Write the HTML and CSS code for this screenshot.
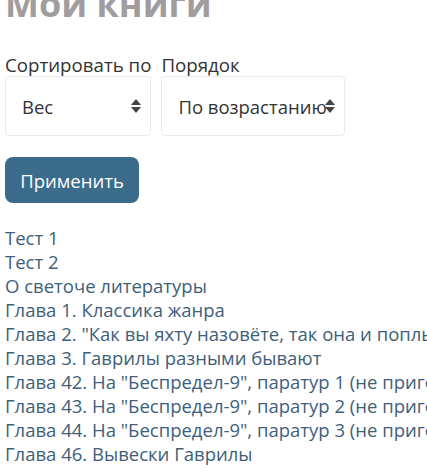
FILE: index.html
```html
<!DOCTYPE html>
<html lang="ru">
<head>
<meta charset="utf-8">
<link rel="stylesheet" href="styles.css">
</head>
<body>
<div class="page">
  <h1 class="title">Мои книги</h1>
  <form class="sort-form">
    <div class="fields">
      <div class="field">
        <label class="field-label">Сортировать по</label>
        <div class="select select-sort"><span>Вес</span><span class="arrows"></span></div>
      </div>
      <div class="field">
        <label class="field-label">Порядок</label>
        <div class="select select-order"><span>По возрастанию</span><span class="arrows"></span></div>
      </div>
    </div>
    <button type="button" class="btn">Применить</button>
  </form>
  <ul class="books">
    <li>Тест 1</li>
    <li>Тест 2</li>
    <li>О светоче литературы</li>
    <li>Глава 1. Классика жанра</li>
    <li>Глава 2. "Как вы яхту назовёте, так она и поплывёт"</li>
    <li>Глава 3. Гаврилы разными бывают</li>
    <li>Глава 42. На "Беспредел-9", паратур 1 (не пригодится)</li>
    <li>Глава 43. На "Беспредел-9", паратур 2 (не пригодится)</li>
    <li>Глава 44. На "Беспредел-9", паратур 3 (не пригодится)</li>
    <li>Глава 46. Вывески Гаврилы</li>
  </ul>
</div>
</body>
</html>
```

FILE: styles.css
```css
html, body {
  margin: 0;
  padding: 0;
  background: #fff;
  overflow: hidden;
}
.page {
  font-family: "Open Sans", "Noto Sans", sans-serif;
  font-size: 18.5px;
  color: #333;
  padding: 0 5px;
  white-space: nowrap;
  overflow: hidden;
}
.title {
  margin: -16px 0 0 0;
  font-size: 36px;
  font-weight: 700;
  color: #a19d9e;
  line-height: 40px;
}
.sort-form {
  margin-top: 30px;
}
.fields {
  display: flex;
  gap: 10px;
}
.field {
  display: flex;
  flex-direction: column;
}
.field-label {
  font-size: 18.7px;
  line-height: 22px;
  color: #333;
}
.select {
  box-sizing: border-box;
  height: 60px;
  border: 1px solid #eaeaea;
  border-radius: 4px;
  display: flex;
  align-items: center;
  position: relative;
  font-size: 18.5px;
  color: #333;
  overflow: hidden;
}
.select-sort {
  width: 146px;
  padding-left: 16px;
}
.select-order {
  width: 184px;
  padding-left: 16px;
}
.arrows {
  position: absolute;
  right: 9px;
  top: 50%;
  width: 10px;
  height: 14px;
  margin-top: -7px;
}
.arrows::before, .arrows::after {
  content: "";
  position: absolute;
  left: 0;
  border-left: 5px solid transparent;
  border-right: 5px solid transparent;
}
.arrows::before {
  top: 0;
  border-bottom: 6px solid #444;
}
.arrows::after {
  bottom: 0;
  border-top: 6px solid #444;
}
.btn {
  margin-top: 21px;
  display: block;
  width: 134px;
  height: 46px;
  border: none;
  border-radius: 8px;
  background: #3b6c8c;
  color: #fff;
  font-family: "Open Sans", "Noto Sans", sans-serif;
  font-size: 18.5px;
  padding: 0;
}
.books {
  list-style: none;
  margin: 23px 0 0 0;
  padding: 0;
  color: #40607a;
  font-size: 18.5px;
  line-height: 24px;
}
```
